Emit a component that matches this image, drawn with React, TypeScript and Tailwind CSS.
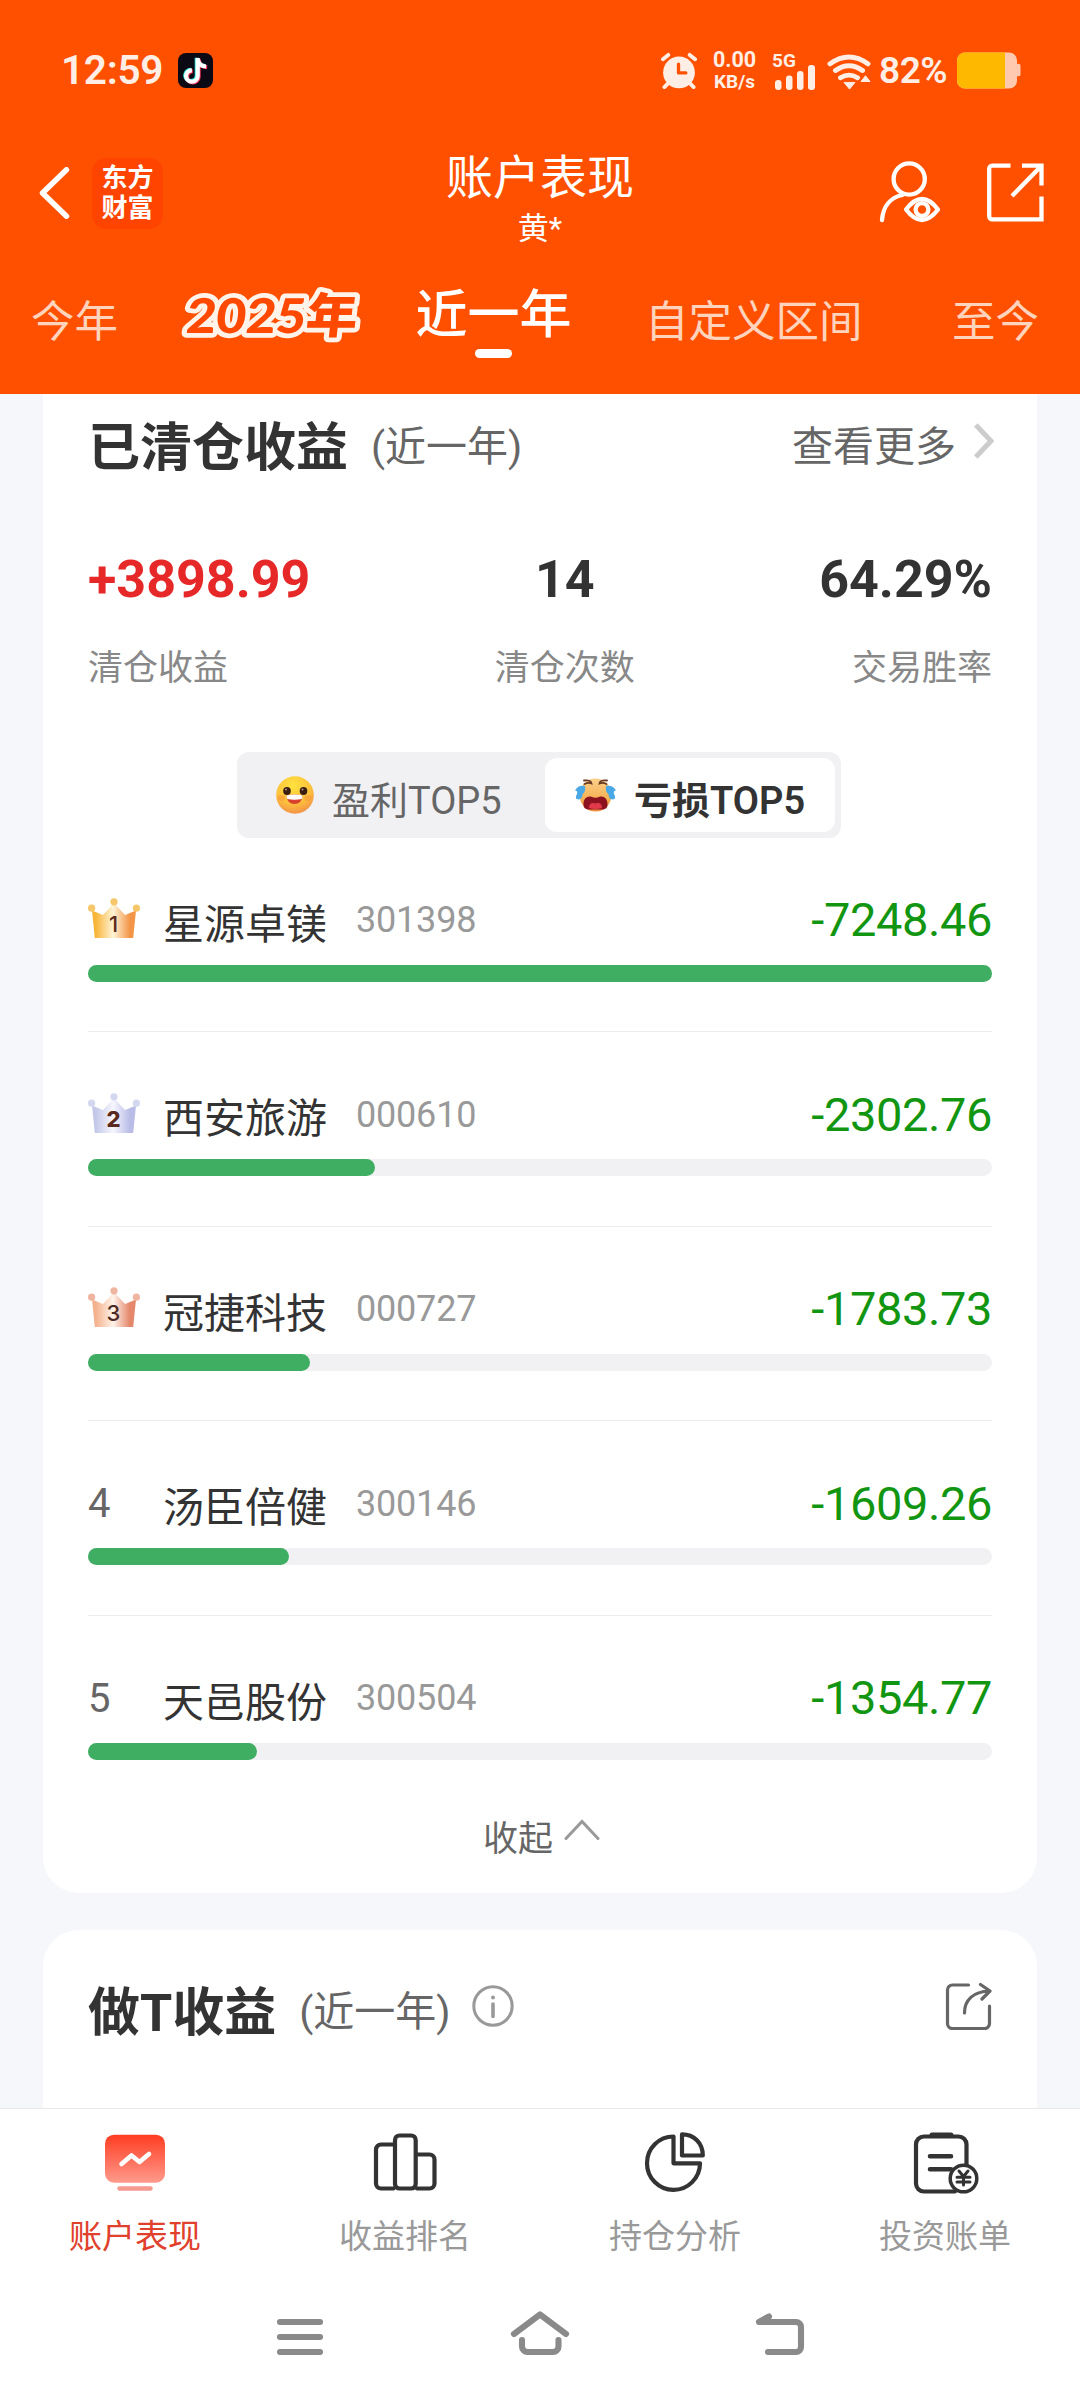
import type { ReactNode } from 'react'

interface Stock {
  rank: number
  name: string
  code: string
  amount: number
}

const STOCKS: Stock[] = [
  { rank: 1, name: '星源卓镁', code: '301398', amount: -7248.46 },
  { rank: 2, name: '西安旅游', code: '000610', amount: -2302.76 },
  { rank: 3, name: '冠捷科技', code: '000727', amount: -1783.73 },
  { rank: 4, name: '汤臣倍健', code: '300146', amount: -1609.26 },
  { rank: 5, name: '天邑股份', code: '300504', amount: -1354.77 },
]

const MAX_LOSS = Math.max(...STOCKS.map(s => Math.abs(s.amount)))

const CROWNS: Record<number, { edge: string; mid: string; end: string; ball: string; text: string; weight: number }> = {
  1: { edge: '#f7b436', mid: '#fff4d6', end: '#f39548', ball: '#f6c668', text: '#5a2a1c', weight: 500 },
  2: { edge: '#c3c8e8', mid: '#f6f6fd', end: '#b9bce6', ball: '#d3d7f0', text: '#5a2a20', weight: 800 },
  3: { edge: '#f3b18d', mid: '#fff3ea', end: '#e4876a', ball: '#efb5a0', text: '#4a2a24', weight: 500 },
}

const SYSTEM_KEYS = [
  'M10 14H50M10 29H50M10 44H50',
  'M4 26 30 6.5 56 26M12 32V38.500a5.500 5.500 0 0 0 5.500 5.500H43a5.500 5.500 0 0 0 5.500-5.500V32',
  'M19 8.500 9 14H46a5 5 0 0 1 5 5V39a5 5 0 0 1-5 5H18',
]

function Crown({ rank }: { rank: number }) {
  const c = CROWNS[rank]
  return (
    <svg width="52" height="40" viewBox="0 0 52 40">
      <defs>
        <linearGradient id={`crown-${rank}`} x1="0" x2="1" y1="0" y2="0">
          <stop offset="0.08" stopColor={c.edge} />
          <stop offset="0.48" stopColor={c.mid} />
          <stop offset="0.86" stopColor={c.end} />
        </linearGradient>
      </defs>
      <path d="M4 12.500 15 17 26 5 37 17 48 12.500 45.200 40H6.800Z" fill={`url(#crown-${rank})`} />
      <circle cx="3.600" cy="10.200" r="3.600" fill={c.ball} />
      <circle cx="26" cy="3.800" r="3.600" fill={c.ball} />
      <circle cx="48.400" cy="10.200" r="3.600" fill={c.ball} />
      <text x="25.500" y="34" textAnchor="middle" fontFamily="Inter, Roboto, sans-serif" fontSize="22" fontWeight={c.weight} fill={c.text}>
        {rank}
      </text>
    </svg>
  )
}

function StatusBar() {
  return (
    <div className="flex h-[140px] items-center pt-px pr-[59px] pl-[61px] text-[#ffeee5]">
      <span className="w-[117px] text-[40.5px] font-semibold tracking-[-0.3px]">12:59</span>
      <svg width="35" height="35" viewBox="0 0 35 36" preserveAspectRatio="none">
        <rect width="35" height="36" rx="8" fill="#0b0a14" />
        <g fill="none" strokeWidth="4.200">
          <path d="M18.800 5V23a5.800 5.800 0 1 1-5.800-5.800M18.800 6c.8 4.600 4 7.200 8.600 7.400" stroke="#2ee6e0" />
          <path d="M20.600 6V24.500a5.800 5.800 0 1 1-5.800-5.800M20.600 7.200c.8 4.600 4 7.200 8.600 7.400" stroke="#f5315a" />
          <path d="M19.700 5.200V23.700a5.800 5.800 0 1 1-5.800-5.800M19.700 6.500c.8 4.600 4 7.200 8.400 7.400" stroke="#fff" />
        </g>
      </svg>
      <div className="ml-auto flex items-center">
        <svg width="38" height="37" viewBox="0 0 38 38" fill="currentColor">
          <circle cx="19" cy="21" r="16.300" />
          <g fill="none" stroke="currentColor" strokeWidth="4" strokeLinecap="round">
            <path d="M2.500 7.500 8 3M35.500 7.500 30 3M8 32l-4 4M30 32l4 4" />
          </g>
          <path d="M18.500 12.500V21.500H26" fill="none" stroke="#ff5000" strokeWidth="3.400" strokeLinecap="round" strokeLinejoin="round" />
        </svg>
        <div className="ml-[13px] flex w-[47px] flex-col items-center text-[21.5px] leading-[22px] font-bold">
          <span>0.00</span>
          <span className="text-[19px]">KB/s</span>
        </div>
        <svg className="ml-[14px]" width="46" height="56" viewBox="0 -8 46 56" fill="currentColor">
          <text x="0" y="16" fontFamily="Roboto, sans-serif" fontSize="19" fontWeight="700">5G</text>
          <rect x="3" y="29" width="6.500" height="10" rx="3" />
          <rect x="14" y="24.500" width="6.500" height="14.500" rx="3" />
          <rect x="25" y="20" width="6.500" height="19" rx="3" />
          <rect x="36" y="14" width="7" height="25" rx="3" />
        </svg>
        <svg className="ml-[8px]" width="46" height="40" viewBox="0 0 46 42" preserveAspectRatio="none">
          <g fill="none" stroke="currentColor" strokeWidth="5" strokeLinecap="round">
            <path d="M4 13.500Q23 -1 42 13.500M9.500 20.500Q23 10.500 36.500 20.500M14.500 28Q23 22.500 31.500 28" />
          </g>
          <path d="M18 33h11l-5.500 7ZM35 32h9l-4.500-6Z" fill="currentColor" stroke="currentColor" strokeWidth="1" strokeLinejoin="round" />
        </svg>
        <span className="ml-[7px] w-[78px] text-[37px] font-semibold tracking-[-0.5px]">82%</span>
        <svg width="64" height="37" viewBox="0 0 64 38" preserveAspectRatio="none">
          <rect x="0" y="0.500" width="60" height="37" rx="8" fill="#ffc9b0" />
          <rect x="59" y="12" width="4.500" height="13" rx="2" fill="#ffc9b0" />
          <path d="M48 0.500H8a8 8 0 0 0-8 8v21a8 8 0 0 0 8 8h40Z" fill="#ffb800" />
        </svg>
      </div>
    </div>
  )
}

function TitleBar() {
  return (
    <div className="grid h-[106px] grid-cols-[1fr_auto_1fr] items-center px-[34px] text-white">
      <div className="flex items-center">
        <svg className="ml-[5px]" width="32" height="52" viewBox="0 0 32 52" fill="none" stroke="currentColor" strokeWidth="5.500" strokeLinecap="round" strokeLinejoin="round">
          <path d="M27.500 2.800 3.500 26 27.500 49.200" />
        </svg>
        <div className="ml-[21px] flex h-[71px] w-[71px] flex-col items-center justify-center rounded-[14px] bg-[#ff4400] text-[26px] leading-[30px] font-bold">
          <span>东方</span>
          <span>财富</span>
        </div>
      </div>
      <div className="mt-[11px] flex flex-col items-center self-start">
        <h1 className="text-[47px] leading-[54px]">账户表现</h1>
        <p className="mt-[7px] text-[31px] leading-[34px]">黄*</p>
      </div>
      <div className="flex items-center justify-end">
        <svg width="66" height="64" viewBox="0 0 66 64" fill="none" stroke="currentColor" strokeWidth="4.300" strokeLinecap="round" strokeLinejoin="round">
          <circle cx="32.200" cy="18" r="15.600" />
          <path d="M5 59C6 46 13 36.500 25.500 34" />
          <path d="M29 48.500Q45 27.500 61 48.500 45 69.500 29 48.500Z" />
          <circle cx="45" cy="48.500" r="6.400" />
        </svg>
        <svg className="ml-[42px]" width="61" height="61" viewBox="0 0 61 61" fill="none" stroke="currentColor" strokeWidth="4.300">
          <path d="M25.500 2.600H7.200a3 3 0 0 0-3 3v47.700a3 3 0 0 0 3 3H56.500V33.500M37 2.600H56.500V22.500M56 3.200 27 33" />
        </svg>
      </div>
    </div>
  )
}

function PeriodTabs() {
  return (
    <div className="flex h-[148px] items-start pl-[31px] text-[43.5px] leading-[60px] whitespace-nowrap text-[#ffd3bc]">
      <span className="mt-[46.5px] w-[87px]">今年</span>
      <svg className="mt-[20px] ml-[48px]" width="212" height="100" viewBox="0 0 212 100">
        <text
          x="19"
          y="67"
          transform="skewX(-6) translate(7 0)"
          fontFamily="Lato, 'Noto Sans CJK SC', sans-serif"
          fontSize="48"
          fontWeight="900"
          textLength="171"
          lengthAdjust="spacingAndGlyphs"
          fill="#ff4800"
          stroke="#fff3ea"
          strokeWidth="9.500"
          strokeLinejoin="round"
          paintOrder="stroke"
        >
          2025年
        </text>
      </svg>
      <div className="mt-[40px] ml-[37px] flex w-[157px] flex-col items-center text-[52px] font-medium text-white">
        <span>近一年</span>
        <span className="mt-[3px] h-[9px] w-[37px] rounded-full bg-white" />
      </div>
      <span className="mt-[46.5px] ml-[73px] w-[218px]">自定义区间</span>
      <span className="mt-[46.5px] ml-[89px]">至今</span>
    </div>
  )
}

function Stat({ value, label, className = '' }: { value: string; label: string; className?: string }) {
  return (
    <div className={`flex flex-col ${className}`}>
      <span className="text-[52px] leading-[60px] font-bold">{value}</span>
      <span className="mt-[37px] text-[35px] leading-[44px] text-[#888]">{label}</span>
    </div>
  )
}

function HappyFace() {
  return (
    <svg width="38" height="38" viewBox="0 0 38 38">
      <defs>
        <radialGradient id="happy" cx="0.45" cy="0.25" r="0.8">
          <stop offset="0" stopColor="#ffe23f" />
          <stop offset="0.6" stopColor="#fcc03c" />
          <stop offset="1" stopColor="#f28a4a" />
        </radialGradient>
      </defs>
      <circle cx="19" cy="19" r="18.800" fill="url(#happy)" />
      <ellipse cx="5.500" cy="22" rx="4" ry="3" fill="#f99a3c" opacity="0.6" />
      <ellipse cx="32" cy="22" rx="4" ry="3" fill="#f99a3c" opacity="0.6" />
      <ellipse cx="11" cy="15" rx="3.800" ry="4" fill="#3b1d12" />
      <ellipse cx="27.500" cy="15" rx="3.800" ry="4" fill="#3b1d12" />
      <circle cx="10" cy="13.500" r="1" fill="#a98" />
      <circle cx="26.500" cy="13.500" r="1" fill="#a98" />
      <path d="M10.500 19.500q8.500-2 16 0c0 5-3.500 8.500-8 8.500s-8-3.500-8-8.500Z" fill="#d9412e" />
      <path d="M10.500 19.500q8.500-2 16 0 0 2-.8 3.500-7.200 1.500-14.400 0-.8-1.500-.8-3.500Z" fill="#fff" />
    </svg>
  )
}

function CryingFace() {
  return (
    <svg width="43" height="34" viewBox="0 0 43 34">
      <defs>
        <linearGradient id="crying" x1="0" x2="0" y1="0" y2="1">
          <stop offset="0" stopColor="#fbd08a" />
          <stop offset="0.6" stopColor="#f6b255" />
          <stop offset="1" stopColor="#ef8f3c" />
        </linearGradient>
      </defs>
      <ellipse cx="21.500" cy="17" rx="16" ry="16.500" fill="url(#crying)" />
      <path d="M10 2.500q7-1 7.500 3-3-1.500-7 .5M33 2.500q-7-1-7.500 3 3-1.500 7 .5" fill="none" stroke="#6b3a26" strokeWidth="1.800" strokeLinecap="round" />
      <path d="M11 8C6 7 3 9 1 12.500q3 0 2 3.500-3 5 1.500 5.500 4-.5 4-5.500 3.500-2 2.500-8ZM32 8c5-1 8 1 10 4.500q-3 0-2 3.500 3 5-1.500 5.500-4-.5-4-5.500-3.500-2-2.500-8Z" fill="#4aa8e6" />
      <path d="M9.500 27C9 20 14 17.500 18 19q3.500 1.500 7 0c4-1.500 9 1 8.500 8-.5 5-4 4.500-12 4.500s-11.500.5-12-4.500Z" fill="#8c1220" />
      <path d="M15 30q0-4.500 3.500-5 3-.5 3 1 0-1.500 3-1 3.500.5 3.500 5-6.500 2-13 0Z" fill="#e03a4a" />
    </svg>
  )
}

function TopSwitch() {
  return (
    <div className="mt-[61px] ml-[149px] flex h-[86px] w-[604px] rounded-[12px] bg-[#f1f1f4] p-[6px] text-[38px] leading-[50px]">
      <div className="flex w-[302px] items-center pl-[33px] text-[#666]">
        <HappyFace />
        <span className="mt-[11px] ml-[18px]">盈利TOP5</span>
      </div>
      <div className="flex w-[290px] items-center rounded-[12px] bg-white pl-[29px] font-semibold text-[#333]">
        <CryingFace />
        <span className="mt-[11px] ml-[17px]">亏损TOP5</span>
      </div>
    </div>
  )
}

function StockRow({ stock, last }: { stock: Stock; last: boolean }) {
  const width = (Math.abs(stock.amount) / MAX_LOSS) * 100
  return (
    <li className={`h-[194.5px] pt-[57px] ${last ? '' : 'border-b border-[#ececee]'}`}>
      <div className="flex h-[50px] items-center">
        <div className="w-[75px] text-[40px] text-[#666]">
          {stock.rank <= 3 ? <div className="mb-[3px]"><Crown rank={stock.rank} /></div> : <div className="mt-[2px]">{stock.rank}</div>}
        </div>
        <span className="mt-[10px] text-[41px] leading-[50px] text-[#333]">{stock.name}</span>
        <span className="mt-px ml-[29px] text-[36px] tracking-[-0.2px] text-[#999]">{stock.code}</span>
        <span className="mt-[2px] ml-auto text-[47px] tracking-[-0.4px] text-[#129612]">{stock.amount.toFixed(2)}</span>
      </div>
      <div className="mt-[20px] h-[17px] rounded-full bg-[#f1f1f4]">
        <div className="h-full rounded-full bg-[#3fae63]" style={{ width: `${width}%` }} />
      </div>
    </li>
  )
}

function NavItem({ label, active, children }: { label: string; active?: boolean; children: ReactNode }) {
  return (
    <div className={`flex flex-1 flex-col items-center pt-[22px] ${active ? 'text-[#e0402c]' : 'text-[#999]'}`}>
      <svg width="68" height="68" viewBox="0 0 68 68" fill="none" stroke="#333" strokeWidth="4.200" strokeLinejoin="round" strokeLinecap="round">
        {children}
      </svg>
      <span className="mt-[16px] text-[33px] leading-[44px]">{label}</span>
    </div>
  )
}

function BottomNav() {
  return (
    <nav className="flex h-[172px] border-t border-[#e9e9eb] bg-white">
      <NavItem label="账户表现" active>
        <defs>
          <linearGradient id="screen" x1="0" x2="0" y1="0" y2="1">
            <stop offset="0" stopColor="#ff3d22" />
            <stop offset="1" stopColor="#ff9a8c" />
          </linearGradient>
        </defs>
        <rect x="4" y="3.700" width="60" height="48" rx="9" fill="url(#screen)" stroke="none" />
        <path d="M20.500 33 30.500 24.500 38.500 31 48 23" stroke="#fff" strokeWidth="4.600" />
        <path d="M18.500 57.500H49.500" stroke="#f59a8e" strokeWidth="4.400" />
      </NavItem>
      <NavItem label="收益排名">
        <path d="M22.500 13.500H10a5 5 0 0 0-5 5V52.500a5 5 0 0 0 5 5H22.500" />
        <rect x="24" y="4.500" width="20.700" height="53" rx="4.500" />
        <path d="M46 23.500H58.500a5 5 0 0 1 5 5V52.500a5 5 0 0 1-5 5H46" />
      </NavItem>
      <NavItem label="持仓分析">
        <path d="M32.500 5.500V32.300H59A26.500 26.700 0 1 1 32.500 5.500Z" />
        <path d="M41 3.400V24.500H61.800C61.800 12 53 3.400 41 3.400Z" />
      </NavItem>
      <NavItem label="投资账单">
        <path d="M44 60.500H13a8 8 0 0 1-8-8V13.500a8 8 0 0 1 8-8H47.500a8 8 0 0 1 8 8V34" />
        <path d="M21 3.900H40" strokeWidth="5" />
        <path d="M19 25.300H40M19 38.300H40" strokeWidth="4.600" />
        <circle cx="52.500" cy="47.500" r="13.300" fill="#fff" strokeWidth="3.500" />
        <path d="M48 40 52.500 45.500 57 40M52.500 45.500V54M46 46.200H59M46 51H59" strokeWidth="3" />
      </NavItem>
    </nav>
  )
}

function SystemNav() {
  return (
    <div className="grid h-[120px] grid-cols-[240px_240px_240px] justify-center bg-white pt-[28px] text-[#8a8a8a]">
      {SYSTEM_KEYS.map(d => (
        <svg key={d} className="mx-auto" width="60" height="60" viewBox="0 0 60 60" fill="none" stroke="currentColor" strokeWidth="6.100" strokeLinecap="round" strokeLinejoin="round">
          <path d={d} />
        </svg>
      ))}
    </div>
  )
}

export default function App() {
  return (
    <div className="flex h-[2400px] w-[1080px] flex-col overflow-hidden bg-[#f6f7fa] [font-family:Roboto,'Noto_Sans_CJK_SC',sans-serif]">
      <header className="h-[394px] shrink-0 bg-[#ff5000]">
        <StatusBar />
        <TitleBar />
        <PeriodTabs />
      </header>

      <main className="flex min-h-0 flex-1 flex-col gap-[37px] overflow-hidden px-[43px]">
        <section className="h-[1499px] shrink-0 rounded-b-[36px] bg-white px-[45px]">
          <div className="flex h-[108px] items-center text-[41px] text-[#666]">
            <h2 className="mt-[2px] text-[52px] font-bold text-[#333]">已清仓收益</h2>
            <span className="ml-[23px]">(近一年)</span>
            <span className="ml-auto">查看更多</span>
            <svg className="mr-[-2px] mb-[14px] ml-[18px]" width="20" height="36" viewBox="0 0 20 36" fill="none" stroke="#ccc" strokeWidth="5">
              <path d="M1.800 2 17 18 1.800 34" />
            </svg>
          </div>

          <div className="mt-[48px] flex justify-between text-[#333]">
            <Stat value="+3898.99" label="清仓收益" className="text-[#e62828]" />
            <Stat value="14" label="清仓次数" className="items-center" />
            <Stat value="64.29%" label="交易胜率" className="items-end" />
          </div>

          <TopSwitch />

          <ul className="mt-[-0.5px]">
            {STOCKS.map((s, i) => (
              <StockRow key={s.code} stock={s} last={i === STOCKS.length - 1} />
            ))}
          </ul>

          <div className="flex items-start justify-center pt-[8px] pl-[3px] text-[35px] leading-[44px] text-[#666]">
            <span>收起</span>
            <svg className="mt-px ml-[11px]" width="36" height="22" viewBox="0 0 36 22" fill="none" stroke="#999" strokeWidth="3" strokeLinecap="round">
              <path d="M2 19.500 18 2.500 34 19.500" />
            </svg>
          </div>
        </section>

        <section className="h-[220px] shrink-0 rounded-t-[36px] bg-white px-[45px] pt-[27px]">
          <div className="flex h-[112px] items-center text-[41px] text-[#666]">
            <h2 className="mt-[2px] text-[52px] font-bold text-[#333]">做T收益</h2>
            <span className="ml-[23px]">(近一年)</span>
            <svg className="mb-[14px] ml-[21px]" width="42" height="42" viewBox="0 0 42 42" fill="none" stroke="#999" strokeWidth="3" strokeLinecap="round">
              <circle cx="21" cy="21" r="19.200" />
              <path d="M21 19V31.500" strokeWidth="3.600" />
              <circle cx="21" cy="12.500" r="2" fill="#999" stroke="none" />
            </svg>
            <svg className="mb-[14px] ml-auto" width="47" height="48" viewBox="0 0 47 48" fill="none" stroke="#666" strokeWidth="3.200" strokeLinecap="round" strokeLinejoin="round">
              <path d="M23.500 3H7.500a5 5 0 0 0-5 5V41.500a5 5 0 0 0 5 5H39.500a5 5 0 0 0 5-5V24" />
              <path d="M19.500 31C19.500 18 28 9.500 44.500 9M35.500 2.500 45 9 37 17" />
            </svg>
          </div>
        </section>
      </main>

      <footer className="shrink-0">
        <BottomNav />
        <SystemNav />
      </footer>
    </div>
  )
}
